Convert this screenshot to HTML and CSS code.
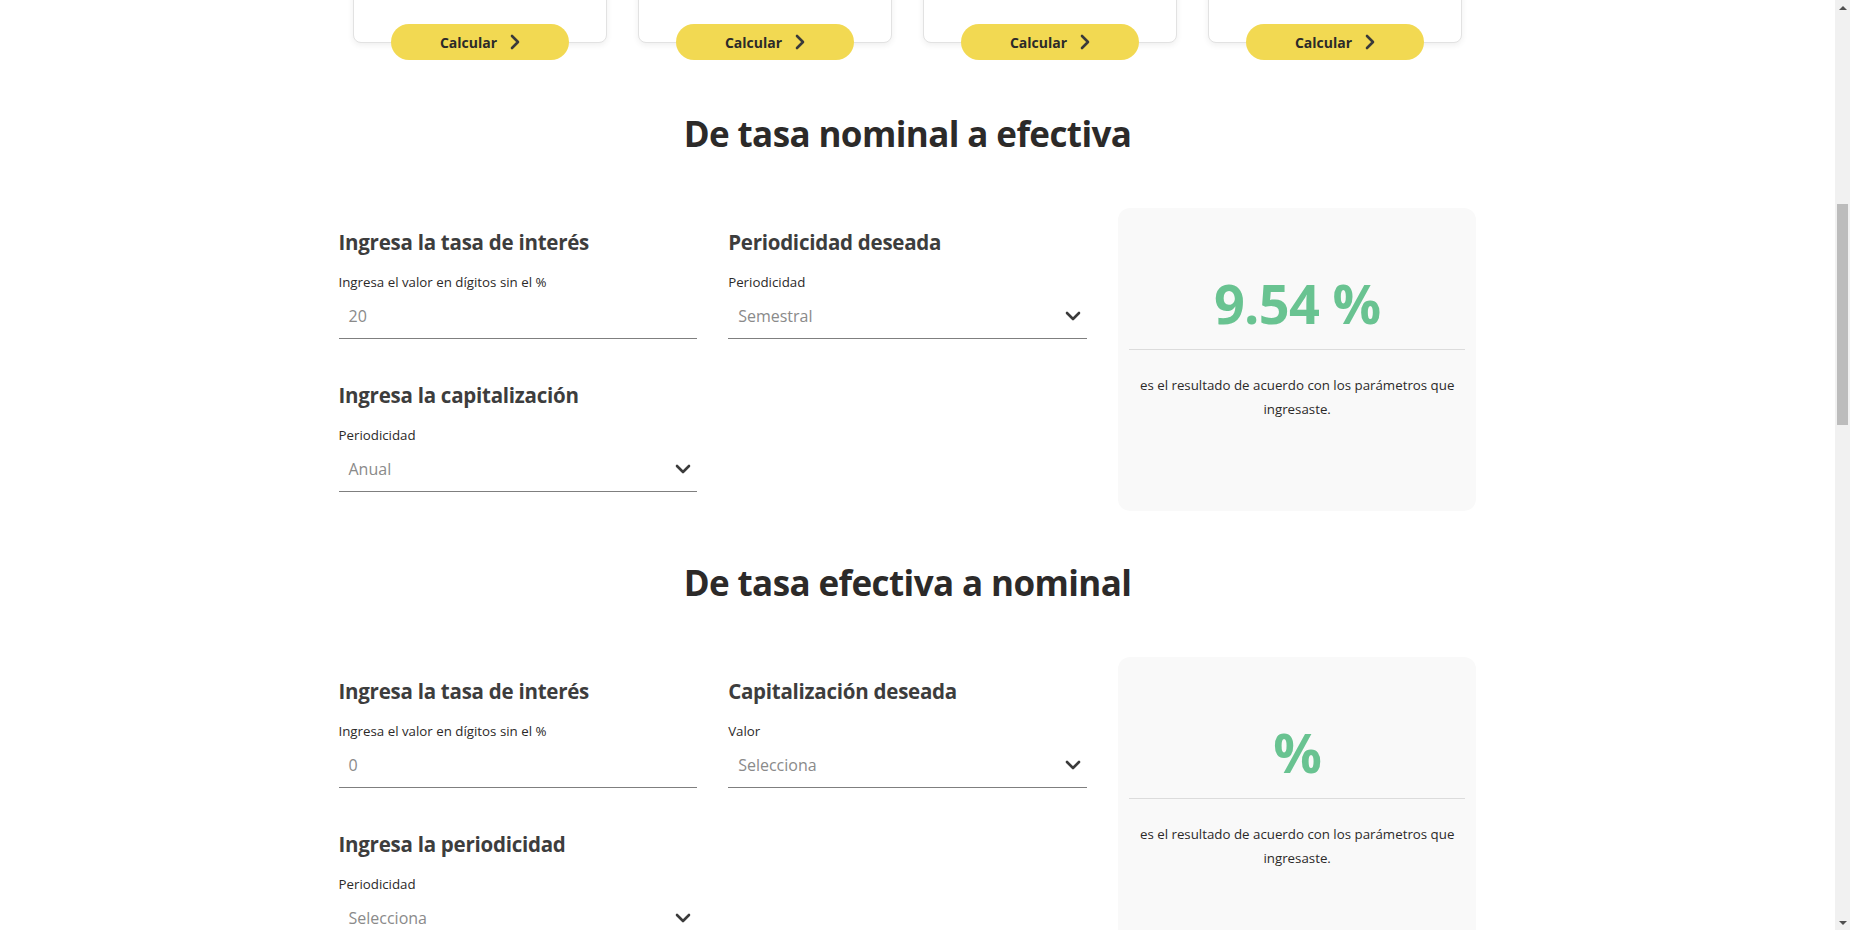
FILE: index.html
```html
<!DOCTYPE html>
<html lang="es">
<head>
<meta charset="utf-8">
<title>Calculadora de tasas</title>
<link rel="stylesheet" href="styles.css">
</head>
<body>
<div class="page">
  <main class="main">
    <section class="cards">
      <div class="card-wrap">
        <div class="card"></div>
        <button class="btn">Calcular <svg class="btn-ico" viewBox="0 0 10 16" width="10" height="16"><polyline points="2,2 8,8 2,14" fill="none" stroke="#3a3a3a" stroke-width="2.6" stroke-linecap="round" stroke-linejoin="round"/></svg></button>
      </div>
      <div class="card-wrap">
        <div class="card"></div>
        <button class="btn">Calcular <svg class="btn-ico" viewBox="0 0 10 16" width="10" height="16"><polyline points="2,2 8,8 2,14" fill="none" stroke="#3a3a3a" stroke-width="2.6" stroke-linecap="round" stroke-linejoin="round"/></svg></button>
      </div>
      <div class="card-wrap">
        <div class="card"></div>
        <button class="btn">Calcular <svg class="btn-ico" viewBox="0 0 10 16" width="10" height="16"><polyline points="2,2 8,8 2,14" fill="none" stroke="#3a3a3a" stroke-width="2.6" stroke-linecap="round" stroke-linejoin="round"/></svg></button>
      </div>
      <div class="card-wrap">
        <div class="card"></div>
        <button class="btn">Calcular <svg class="btn-ico" viewBox="0 0 10 16" width="10" height="16"><polyline points="2,2 8,8 2,14" fill="none" stroke="#3a3a3a" stroke-width="2.6" stroke-linecap="round" stroke-linejoin="round"/></svg></button>
      </div>
    </section>

    <section class="calc">
      <h2 class="calc-title">De tasa nominal a efectiva</h2>
      <div class="calc-grid">
        <div class="field">
          <h3 class="field-title">Ingresa la tasa de interés</h3>
          <div class="field-label">Ingresa el valor en dígitos sin el %</div>
          <div class="input"><span class="input-val">20</span></div>
        </div>
        <div class="field">
          <h3 class="field-title">Periodicidad deseada</h3>
          <div class="field-label">Periodicidad</div>
          <div class="input"><span class="input-val">Semestral</span><svg class="chev" viewBox="0 0 16 10" width="16" height="10"><polyline points="2,2 8,8 14,2" fill="none" stroke="#3b3b3b" stroke-width="2.6" stroke-linecap="round" stroke-linejoin="round"/></svg></div>
        </div>
        <div class="result">
          <div class="result-num">9.54 %</div>
          <div class="result-line"></div>
          <p class="result-text">es el resultado de acuerdo con los parámetros que ingresaste.</p>
        </div>
        <div class="field">
          <h3 class="field-title">Ingresa la capitalización</h3>
          <div class="field-label">Periodicidad</div>
          <div class="input"><span class="input-val">Anual</span><svg class="chev" viewBox="0 0 16 10" width="16" height="10"><polyline points="2,2 8,8 14,2" fill="none" stroke="#3b3b3b" stroke-width="2.6" stroke-linecap="round" stroke-linejoin="round"/></svg></div>
        </div>
      </div>
    </section>

    <section class="calc">
      <h2 class="calc-title">De tasa efectiva a nominal</h2>
      <div class="calc-grid">
        <div class="field">
          <h3 class="field-title">Ingresa la tasa de interés</h3>
          <div class="field-label">Ingresa el valor en dígitos sin el %</div>
          <div class="input"><span class="input-val">0</span></div>
        </div>
        <div class="field">
          <h3 class="field-title">Capitalización deseada</h3>
          <div class="field-label">Valor</div>
          <div class="input"><span class="input-val">Selecciona</span><svg class="chev" viewBox="0 0 16 10" width="16" height="10"><polyline points="2,2 8,8 14,2" fill="none" stroke="#3b3b3b" stroke-width="2.6" stroke-linecap="round" stroke-linejoin="round"/></svg></div>
        </div>
        <div class="result">
          <div class="result-num">%</div>
          <div class="result-line"></div>
          <p class="result-text">es el resultado de acuerdo con los parámetros que ingresaste.</p>
        </div>
        <div class="field">
          <h3 class="field-title">Ingresa la periodicidad</h3>
          <div class="field-label">Periodicidad</div>
          <div class="input"><span class="input-val">Selecciona</span><svg class="chev" viewBox="0 0 16 10" width="16" height="10"><polyline points="2,2 8,8 14,2" fill="none" stroke="#3b3b3b" stroke-width="2.6" stroke-linecap="round" stroke-linejoin="round"/></svg></div>
        </div>
      </div>
    </section>
  </main>

  <div class="scrollbar">
    <div class="sb-arrow sb-up"></div>
    <div class="sb-track"><div class="sb-thumb"></div></div>
    <div class="sb-arrow sb-down"></div>
  </div>
</div>
</body>
</html>
```

FILE: styles.css
```css
html, body {
  margin: 0;
  padding: 0;
  height: 930px;
  overflow: hidden;
  background: #ffffff;
}

body {
  font-family: "Open Sans", "Liberation Sans", sans-serif;
  color: #2c2a29;
}

.page {
  display: flex;
  height: 930px;
}

.main {
  flex: 1;
  padding-right: 20px;
  overflow: hidden;
}

/* top cards */
.cards {
  display: flex;
  justify-content: center;
  gap: 31px;
}

.card-wrap {
  width: 254px;
  display: flex;
  flex-direction: column;
  align-items: center;
}

.card {
  width: 100%;
  box-sizing: border-box;
  height: 200px;
  margin-top: -157px;
  background: #fff;
  border: 1px solid #e2e2e2;
  border-radius: 8px;
  box-shadow: 0 2px 6px rgba(0, 0, 0, 0.07);
}

.btn {
  margin-top: -19px;
  width: 178px;
  height: 36px;
  border: none;
  border-radius: 18px;
  background: #f2d952;
  font-family: "Open Sans", "Liberation Sans", sans-serif;
  font-weight: 700;
  font-size: 14px;
  color: #2c2a29;
  display: flex;
  align-items: center;
  justify-content: center;
  gap: 13px;
  padding: 0;
}

.btn-ico {
  display: block;
}

/* calculator sections */
.calc {
  width: 1138px;
  margin: 0 auto;
}

.calc-title {
  margin: 50px 0 50px;
  font-size: 35px;
  line-height: 48px;
  font-weight: 700;
  text-align: center;
  color: #2c2a29;
  letter-spacing: -0.6px;
}

.calc + .calc .calc-title {
  margin-top: 48px;
  margin-bottom: 50px;
}

.calc-grid {
  display: grid;
  grid-template-columns: repeat(3, 1fr);
  grid-template-rows: auto 1fr;
  column-gap: 31px;
  row-gap: 22px;
  align-items: start;
}

.field {
  padding-top: 20px;
}

.field-title {
  margin: 0 0 17px;
  font-size: 20.5px;
  line-height: 28px;
  font-weight: 700;
  color: #3d3d3d;
  letter-spacing: -0.25px;
}

.field-label {
  font-size: 13.3px;
  line-height: 18px;
  color: #2c2a29;
}

.input {
  height: 44px;
  margin-top: 3px;
  border-bottom: 1px solid #7f7f7f;
  display: flex;
  align-items: center;
  justify-content: space-between;
  padding: 0 6px 0 10px;
}

.input-val {
  font-size: 16px;
  color: #8a8a8a;
}

.chev {
  display: block;
}

.result {
  grid-column: 3;
  grid-row: 1 / span 2;
  height: 303px;
  box-sizing: border-box;
  background: #f9f9f9;
  border-radius: 12px;
  padding: 56px 11px 0;
  text-align: center;
}

.result-num {
  font-size: 54px;
  line-height: 78px;
  font-weight: 700;
  color: #69c391;
  letter-spacing: -0.7px;
}

.result-line {
  height: 1px;
  margin-top: 7px;
  background: #dcdcdc;
}

.result-text {
  margin: 24px 0 0;
  padding: 0;
  font-size: 13.3px;
  line-height: 23.5px;
  color: #2c2a29;
}

/* scrollbar */
.scrollbar {
  width: 15px;
  flex: none;
  background: #f1f1f1;
  display: flex;
  flex-direction: column;
}

.sb-arrow {
  height: 15px;
  display: flex;
  align-items: center;
  justify-content: center;
}

.sb-up::before,
.sb-down::before {
  content: "";
  width: 0;
  height: 0;
  border-left: 4px solid transparent;
  border-right: 4px solid transparent;
}

.sb-up::before {
  border-bottom: 4px solid #505050;
}

.sb-down::before {
  border-top: 4px solid #505050;
}

.sb-track {
  flex: 1;
  padding-top: 189px;
}

.sb-thumb {
  margin: 0 2px;
  height: 221px;
  background: #bcbcbc;
}
```
